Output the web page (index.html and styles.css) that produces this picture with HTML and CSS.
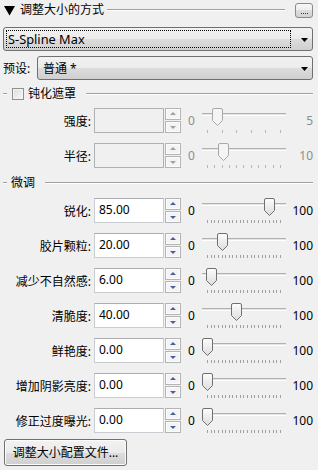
FILE: index.html
```html
<!DOCTYPE html>
<html>
<head>
<meta charset="utf-8">
<link rel="stylesheet" href="styles.css">
</head>
<body>
<div class="panel">
  <div class="head">
    <svg class="tri" width="11" height="11" viewBox="0 0 11 11"><polygon points="0,1 11,1 5.5,10.5" fill="#000"/></svg>
    <span class="title">调整大小的方式</span>
    <span class="rule"></span>
    <div class="dots"><span class="d"></span><span class="d"></span><span class="d"></span><span class="d"></span></div>
  </div>

  <div class="select first">
    <div class="seltext focus latin">S-Spline Max</div>
    <svg class="arrow" width="7" height="4" viewBox="0 0 7 4"><polygon points="0,0 7,0 3.5,4" fill="#000"/></svg>
  </div>

  <div class="preset">
    <span class="plabel">预设:</span>
    <div class="select grow">
      <div class="seltext">普通 *</div>
      <svg class="arrow" width="7" height="4" viewBox="0 0 7 4"><polygon points="0,0 7,0 3.5,4" fill="#000"/></svg>
    </div>
  </div>

  <div class="ghead">
    <span class="seg"></span>
    <span class="check"></span>
    <span class="gtitle">钝化遮罩</span>
    <span class="rule"></span>
  </div>

  <div class="row disabled">
    <span class="lbl">强度:</span>
    <div class="inp"></div>
    <div class="spin"><span class="sb up"></span><span class="sb down"></span></div>
    <span class="min">0</span>
    <div class="slider">
      <div class="track"></div>
      <div class="ticks"><i></i><i></i><i></i><i></i><i></i><i></i></div>
      <svg class="thumb" style="left:10px" width="11" height="18" viewBox="0 0 11 18"><path d="M0.5,2 Q0.5,0.5 2,0.5 H9 Q10.5,0.5 10.5,2 V12.5 L5.5,17.5 L0.5,12.5 Z" fill="#f4f4f4" stroke="#a8a8a8"/></svg>
    </div>
    <span class="max">5</span>
  </div>

  <div class="row disabled">
    <span class="lbl">半径:</span>
    <div class="inp"></div>
    <div class="spin"><span class="sb up"></span><span class="sb down"></span></div>
    <span class="min">0</span>
    <div class="slider">
      <div class="track"></div>
      <div class="ticks"><i></i><i></i><i></i><i></i><i></i><i></i><i></i><i></i><i></i><i></i><i></i></div>
      <svg class="thumb" style="left:16px" width="11" height="18" viewBox="0 0 11 18"><path d="M0.5,2 Q0.5,0.5 2,0.5 H9 Q10.5,0.5 10.5,2 V12.5 L5.5,17.5 L0.5,12.5 Z" fill="#f4f4f4" stroke="#a8a8a8"/></svg>
    </div>
    <span class="max">10</span>
  </div>

  <div class="ghead fine">
    <span class="seg"></span>
    <span class="gtitle">微调</span>
    <span class="rule"></span>
  </div>

  <div class="row">
    <span class="lbl">锐化:</span>
    <div class="inp">85.00</div>
    <div class="spin"><span class="sb up"></span><span class="sb down"></span></div>
    <span class="min">0</span>
    <div class="slider">
      <div class="track"></div>
      <div class="ticks"><i></i><i></i><i></i><i></i><i></i><i></i><i></i><i></i><i></i><i></i><i></i><i></i><i></i><i></i><i></i><i></i><i></i><i></i><i></i><i></i><i></i></div>
      <svg class="thumb" style="left:62px" width="11" height="18" viewBox="0 0 11 18"><defs><linearGradient id="g1" x1="0" y1="0" x2="0" y2="1"><stop offset="0" stop-color="#fdfdfd"/><stop offset="1" stop-color="#dcdcdc"/></linearGradient></defs><path d="M0.5,2 Q0.5,0.5 2,0.5 H9 Q10.5,0.5 10.5,2 V12.5 L5.5,17.5 L0.5,12.5 Z" fill="url(#g1)" stroke="#707070"/></svg>
    </div>
    <span class="max">100</span>
  </div>

  <div class="row">
    <span class="lbl">胶片颗粒:</span>
    <div class="inp">20.00</div>
    <div class="spin"><span class="sb up"></span><span class="sb down"></span></div>
    <span class="min">0</span>
    <div class="slider">
      <div class="track"></div>
      <div class="ticks"><i></i><i></i><i></i><i></i><i></i><i></i><i></i><i></i><i></i><i></i><i></i><i></i><i></i><i></i><i></i><i></i><i></i><i></i><i></i><i></i><i></i></div>
      <svg class="thumb" style="left:15px" width="11" height="18" viewBox="0 0 11 18"><path d="M0.5,2 Q0.5,0.5 2,0.5 H9 Q10.5,0.5 10.5,2 V12.5 L5.5,17.5 L0.5,12.5 Z" fill="url(#g1)" stroke="#707070"/></svg>
    </div>
    <span class="max">100</span>
  </div>

  <div class="row">
    <span class="lbl">减少不自然感:</span>
    <div class="inp">6.00</div>
    <div class="spin"><span class="sb up"></span><span class="sb down"></span></div>
    <span class="min">0</span>
    <div class="slider">
      <div class="track"></div>
      <div class="ticks"><i></i><i></i><i></i><i></i><i></i><i></i><i></i><i></i><i></i><i></i><i></i><i></i><i></i><i></i><i></i><i></i><i></i><i></i><i></i><i></i><i></i></div>
      <svg class="thumb" style="left:4px" width="11" height="18" viewBox="0 0 11 18"><path d="M0.5,2 Q0.5,0.5 2,0.5 H9 Q10.5,0.5 10.5,2 V12.5 L5.5,17.5 L0.5,12.5 Z" fill="url(#g1)" stroke="#707070"/></svg>
    </div>
    <span class="max">100</span>
  </div>

  <div class="row">
    <span class="lbl">清脆度:</span>
    <div class="inp">40.00</div>
    <div class="spin"><span class="sb up"></span><span class="sb down"></span></div>
    <span class="min">0</span>
    <div class="slider">
      <div class="track"></div>
      <div class="ticks"><i></i><i></i><i></i><i></i><i></i><i></i><i></i><i></i><i></i><i></i><i></i><i></i><i></i><i></i><i></i><i></i><i></i><i></i><i></i><i></i><i></i></div>
      <svg class="thumb" style="left:29px" width="11" height="18" viewBox="0 0 11 18"><path d="M0.5,2 Q0.5,0.5 2,0.5 H9 Q10.5,0.5 10.5,2 V12.5 L5.5,17.5 L0.5,12.5 Z" fill="url(#g1)" stroke="#707070"/></svg>
    </div>
    <span class="max">100</span>
  </div>

  <div class="row">
    <span class="lbl">鲜艳度:</span>
    <div class="inp">0.00</div>
    <div class="spin"><span class="sb up"></span><span class="sb down"></span></div>
    <span class="min">0</span>
    <div class="slider">
      <div class="track"></div>
      <div class="ticks"><i></i><i></i><i></i><i></i><i></i><i></i><i></i><i></i><i></i><i></i><i></i><i></i><i></i><i></i><i></i><i></i><i></i><i></i><i></i><i></i><i></i></div>
      <svg class="thumb" style="left:0px" width="11" height="18" viewBox="0 0 11 18"><path d="M0.5,2 Q0.5,0.5 2,0.5 H9 Q10.5,0.5 10.5,2 V12.5 L5.5,17.5 L0.5,12.5 Z" fill="url(#g1)" stroke="#707070"/></svg>
    </div>
    <span class="max">100</span>
  </div>

  <div class="row">
    <span class="lbl">增加阴影亮度:</span>
    <div class="inp">0.00</div>
    <div class="spin"><span class="sb up"></span><span class="sb down"></span></div>
    <span class="min">0</span>
    <div class="slider">
      <div class="track"></div>
      <div class="ticks"><i></i><i></i><i></i><i></i><i></i><i></i><i></i><i></i><i></i><i></i><i></i><i></i><i></i><i></i><i></i><i></i><i></i><i></i><i></i><i></i><i></i></div>
      <svg class="thumb" style="left:0px" width="11" height="18" viewBox="0 0 11 18"><path d="M0.5,2 Q0.5,0.5 2,0.5 H9 Q10.5,0.5 10.5,2 V12.5 L5.5,17.5 L0.5,12.5 Z" fill="url(#g1)" stroke="#707070"/></svg>
    </div>
    <span class="max">100</span>
  </div>

  <div class="row">
    <span class="lbl">修正过度曝光:</span>
    <div class="inp">0.00</div>
    <div class="spin"><span class="sb up"></span><span class="sb down"></span></div>
    <span class="min">0</span>
    <div class="slider">
      <div class="track"></div>
      <div class="ticks"><i></i><i></i><i></i><i></i><i></i><i></i><i></i><i></i><i></i><i></i><i></i><i></i><i></i><i></i><i></i><i></i><i></i><i></i><i></i><i></i><i></i></div>
      <svg class="thumb" style="left:0px" width="11" height="18" viewBox="0 0 11 18"><path d="M0.5,2 Q0.5,0.5 2,0.5 H9 Q10.5,0.5 10.5,2 V12.5 L5.5,17.5 L0.5,12.5 Z" fill="url(#g1)" stroke="#707070"/></svg>
    </div>
    <span class="max">100</span>
  </div>

  <div class="btn">调整大小配置文件...</div>
</div>
</body>
</html>
```

FILE: styles.css
```css
html, body {
  margin: 0;
  padding: 0;
}
body {
  background: #f0f0f0;
  width: 318px;
  height: 470px;
  overflow: hidden;
  font-family: "Noto Sans", "Noto Sans CJK SC", sans-serif;
  font-size: 12px;
  color: #000;
}
.panel {
  padding: 0 5px 0 3px;
}
.head {
  display: flex;
  align-items: center;
  height: 20px;
}
.tri {
  margin-left: 1px;
  flex: none;
}
.title {
  margin-left: 5px;
  font-size: 12px;
  line-height: 16px;
}
.rule {
  flex: 1;
  height: 0;
  border-top: 1px solid #a0a0a0;
  border-bottom: 1px solid #ffffff;
}
.head .rule {
  margin: 0 10px 0 3px;
}
.dots {
  width: 18px;
  height: 15px;
  box-sizing: border-box;
  border: 1px solid #8a8a8a;
  border-radius: 3px;
  background: linear-gradient(#f6f6f6 0%, #ececec 50%, #dedede 50%, #d2d2d2 100%);
  display: flex;
  justify-content: center;
  align-items: flex-end;
  gap: 1px;
  padding-bottom: 3px;
}
.d {
  width: 1px;
  height: 1px;
  background: #303060;
}
.select {
  height: 24px;
  box-sizing: border-box;
  border: 1px solid #707070;
  border-radius: 3px;
  background: linear-gradient(#f2f2f2 0%, #ebebeb 50%, #dddddd 50%, #cfcfcf 100%);
  display: flex;
  align-items: center;
}
.select.first {
  margin-top: 7px;
}
.seltext {
  flex: 1;
  height: 18px;
  box-sizing: border-box;
  margin-left: 2px;
  padding-left: 1px;
  line-height: 17px;
  border: 1px dotted transparent;
}
.seltext.focus {
  border-color: #000;
}
.seltext.latin {
  font-size: 12.8px;
}
.arrow {
  flex: none;
  margin: 1px 4px 0 10px;
}
.preset {
  display: flex;
  align-items: center;
  margin-top: 5px;
}
.plabel {
  width: 34px;
  flex: none;
}
.grow {
  flex: 1;
}
.grow .seltext {
  margin-left: 3px;
}
.ghead {
  display: flex;
  align-items: center;
  height: 18px;
  margin-top: 5px;
}
.ghead.fine {
  height: 20px;
  margin-top: 0;
}
.seg {
  width: 4px;
  height: 0;
  border-top: 1px solid #a0a0a0;
  border-bottom: 1px solid #ffffff;
  flex: none;
}
.check {
  width: 12px;
  height: 12px;
  box-sizing: border-box;
  border: 1px solid #8e8f8f;
  background: linear-gradient(135deg, #dcdcdc, #f8f8f8);
  box-shadow: inset 0 0 0 1px #f4f4f4;
  margin-left: 5px;
  flex: none;
}
.gtitle {
  margin: 0 10px 0 4px;
  line-height: 16px;
}
.row {
  display: flex;
  align-items: center;
  height: 35px;
}
.lbl {
  width: 88px;
  text-align: right;
  flex: none;
  white-space: nowrap;
}
.inp {
  width: 70px;
  height: 25px;
  box-sizing: border-box;
  margin-left: 3px;
  border: 1px solid #c9cdd2;
  border-top-color: #abadb3;
  background: #ffffff;
  padding-left: 4px;
  line-height: 22px;
  flex: none;
}
.spin {
  display: flex;
  flex-direction: column;
  gap: 1px;
  margin-left: 1px;
  flex: none;
}
.sb {
  width: 16px;
  height: 12px;
  box-sizing: border-box;
  border: 1px solid #b4b4b4;
  background: #f4f4f4;
  box-shadow: inset 0 0 0 1px #fcfcfc;
  position: relative;
}
.sb::after {
  content: "";
  position: absolute;
  left: 4px;
  width: 0;
  height: 0;
  border-left: 3px solid transparent;
  border-right: 3px solid transparent;
}
.sb.up::after {
  top: 3px;
  border-bottom: 3px solid #4d5e96;
}
.sb.down::after {
  top: 4px;
  border-top: 3px solid #4d5e96;
}
.min {
  margin-left: 7px;
  width: 7px;
  flex: none;
}
.slider {
  position: relative;
  width: 84px;
  height: 26px;
  margin-left: 7px;
  margin-top: 1px;
  flex: none;
}
.track {
  position: absolute;
  left: 0;
  right: 0;
  top: 5px;
  height: 1px;
  border-top: 1px solid #b0b0b0;
  border-bottom: 1px solid #ffffff;
  background: #e4e4e4;
}
.ticks {
  position: absolute;
  left: 5px;
  width: 74px;
  top: 22px;
  height: 3px;
  display: flex;
  justify-content: space-between;
}
.ticks i {
  width: 1px;
  height: 3px;
  background: #a0a0a0;
}
.thumb {
  position: absolute;
  top: 0;
}
.max {
  flex: 1;
  text-align: right;
}
.disabled .inp {
  background: #f0f0f0;
  border: 1px solid #adb2b5;
}
.disabled .sb::after {
  border-bottom-color: #a0a0a0;
  border-top-color: #a0a0a0;
}
.disabled .sb.up::after {
  border-top-color: transparent;
}
.disabled .sb.down::after {
  border-bottom-color: transparent;
}
.disabled .min,
.disabled .max {
  color: #8d8d8d;
}
.disabled .ticks i {
  background: #b8b8b8;
}
.btn {
  margin-top: 1px;
  margin-left: 1px;
  width: 123px;
  height: 27px;
  box-sizing: border-box;
  border: 1px solid #707070;
  border-radius: 3px;
  background: linear-gradient(#f2f2f2 0%, #ebebeb 50%, #dddddd 50%, #cfcfcf 100%);
  box-shadow: inset 0 0 0 1px #fcfcfc;
  text-align: center;
  line-height: 25px;
  white-space: nowrap;
}
```
